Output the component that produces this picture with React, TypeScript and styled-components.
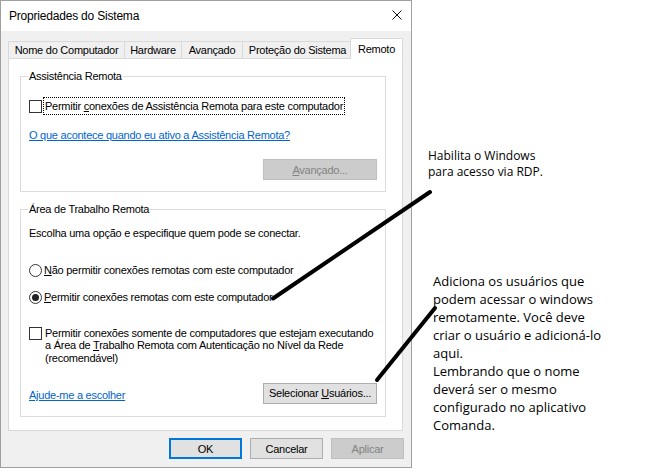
import React from "react";
import styled, { createGlobalStyle } from "styled-components";

const GlobalStyle = createGlobalStyle`
  html, body { margin: 0; padding: 0; background: #fff; }
  body { font-family: "Liberation Sans", Arial, sans-serif; }
  * { box-sizing: border-box; }
`;

const Page = styled.div`
  position: relative;
  width: 648px;
  height: 475px;
  background: #fff;
  overflow: hidden;
`;

const Window = styled.div`
  width: 412px;
  height: 468px;
  border: 1px solid #a0a0a0;
  background: #f0f0f0;
  display: flex;
  flex-direction: column;
  font-family: "Liberation Sans", Arial, sans-serif;
  font-size: 11px;
  letter-spacing: -0.25px;
  color: #000;
`;

const TitleBar = styled.div`
  height: 30px;
  background: #fff;
  display: flex;
  align-items: center;
  justify-content: space-between;
  padding: 0 9px 0 8px;
`;

const Title = styled.span`
  font-size: 12px;
  letter-spacing: -0.2px;
`;

const CloseIcon = styled.svg`
  width: 10px;
  height: 10px;
  margin-top: -2px;
`;

const Body = styled.div`
  flex: 1;
  display: flex;
  flex-direction: column;
  padding: 7px 8px 0 7px;
`;

const TabStrip = styled.div`
  display: flex;
  align-items: flex-end;
  height: 20px;
  position: relative;
  z-index: 1;
`;

const Tab = styled.div<{ $w: number; $active?: boolean }>`
  width: ${(p) => p.$w}px;
  height: ${(p) => (p.$active ? 21 : 17)}px;
  margin-bottom: ${(p) => (p.$active ? -1 : 0)}px;
  margin-left: ${(p) => (p.$active ? -3 : -1)}px;
  &:first-child {
    margin-left: 0;
  }
  border: 1px solid #d9d9d9;
  border-bottom: none;
  background: ${(p) => (p.$active ? "#fff" : "#f0f0f0")};
  display: flex;
  align-items: center;
  justify-content: center;
  white-space: nowrap;
`;

const Panel = styled.div`
  height: 373px;
  background: #fff;
  border: 1px solid #d9d9d9;
  padding: 17px 0 0 11px;
  display: flex;
  flex-direction: column;
  gap: 17px;
`;

const Group = styled.div<{ $pt: number; $pb: number }>`
  position: relative;
  width: 366px;
  border: 1px solid #dcdcdc;
  display: flex;
  flex-direction: column;
  padding: ${(p) => p.$pt}px 8px ${(p) => p.$pb}px 8px;
`;

const Legend = styled.span`
  position: absolute;
  top: -7px;
  left: 7px;
  padding: 0 1px;
  background: #fff;
  line-height: 13px;
`;

const Row = styled.div<{ $mt?: number; $h?: number }>`
  display: flex;
  align-items: center;
  margin-top: ${(p) => p.$mt ?? 0}px;
  height: ${(p) => (p.$h ? `${p.$h}px` : "auto")};
`;

const TopRow = styled.div<{ $mt?: number }>`
  display: flex;
  align-items: flex-start;
  margin-top: ${(p) => p.$mt ?? 0}px;
`;

const CheckBox = styled.span`
  width: 13px;
  height: 13px;
  flex: none;
  border: 1px solid #333;
  background: #fff;
`;

const Radio = styled.span<{ $checked?: boolean }>`
  width: 13px;
  height: 13px;
  flex: none;
  border: 1px solid #333;
  border-radius: 50%;
  background: #fff;
  display: flex;
  align-items: center;
  justify-content: center;
  &::after {
    content: "";
    width: 7px;
    height: 7px;
    border-radius: 50%;
    background: ${(p) => (p.$checked ? "#222" : "transparent")};
  }
`;

const FocusLabel = styled.span`
  margin-left: 1px;
  border: 1px dotted #000;
  padding: 0 1px;
  line-height: 16px;
  white-space: nowrap;
`;

const Label = styled.span<{ $ml: number; $lh?: number }>`
  margin-left: ${(p) => p.$ml}px;
  line-height: ${(p) => p.$lh ?? 16}px;
  white-space: nowrap;
`;

const Text = styled.div<{ $mt?: number }>`
  line-height: 14px;
  margin-top: ${(p) => p.$mt ?? 0}px;
`;

const Link = styled.a<{ $mt?: number }>`
  color: #0066cc;
  text-decoration: underline;
  line-height: 14px;
  align-self: flex-start;
  margin-top: ${(p) => p.$mt ?? 0}px;
  cursor: pointer;
`;

const Button = styled.button<{ $variant?: "default" | "disabled"; $w?: number }>`
  width: ${(p) => p.$w ?? 73}px;
  height: 21px;
  padding: 0;
  font-family: inherit;
  font-size: 11px;
  letter-spacing: -0.25px;
  background: ${(p) => (p.$variant === "disabled" ? "#cccccc" : "#e1e1e1")};
  color: ${(p) => (p.$variant === "disabled" ? "#838383" : "#000")};
  border: ${(p) =>
    p.$variant === "default"
      ? "2px solid #0078d7"
      : p.$variant === "disabled"
      ? "1px solid #bfbfbf"
      : "1px solid #adadad"};
  border-radius: 0;
  display: flex;
  align-items: center;
  justify-content: center;
`;

const RightButton = styled(Button)<{ $mt?: number }>`
  align-self: flex-end;
  margin-top: ${(p) => p.$mt ?? 0}px;
`;

const BetweenRow = styled.div`
  display: flex;
  justify-content: space-between;
  align-items: center;
  margin-top: 19px;
`;

const LowLink = styled(Link)`
  align-self: center;
  margin-top: 3px;
`;

const Footer = styled.div`
  display: flex;
  justify-content: flex-end;
  gap: 8px;
  margin-top: 7px;
  margin-right: -1px;
`;

const Overlay = styled.svg`
  position: absolute;
  left: 0;
  top: 0;
  width: 648px;
  height: 475px;
  pointer-events: none;
`;

const Note = styled.div<{ $x: number; $y: number; $size: number; $lh: number }>`
  position: absolute;
  left: ${(p) => p.$x}px;
  top: ${(p) => p.$y}px;
  font-family: "Open Sans", "Noto Sans", sans-serif;
  font-size: ${(p) => p.$size}px;
  line-height: ${(p) => p.$lh}px;
  color: #000;
  white-space: nowrap;
`;

export default function App() {
  return (
    <Page>
      <GlobalStyle />
      <Window>
        <TitleBar>
          <Title>Propriedades do Sistema</Title>
          <CloseIcon viewBox="0 0 10 10">
            <path d="M0.5 0.5 L9.5 9.5 M9.5 0.5 L0.5 9.5" stroke="#111" strokeWidth="1" fill="none" />
          </CloseIcon>
        </TitleBar>
        <Body>
          <TabStrip>
            <Tab $w={117}>Nome do Computador</Tab>
            <Tab $w={58}>Hardware</Tab>
            <Tab $w={62}>Avançado</Tab>
            <Tab $w={111}>Proteção do Sistema</Tab>
            <Tab $w={53} $active>
              Remoto
            </Tab>
          </TabStrip>
          <Panel>
            <Group $pt={20} $pb={11}>
              <Legend>Assistência Remota</Legend>
              <Row $h={18}>
                <CheckBox />
                <FocusLabel>
                  Permitir <u>c</u>onexões de Assistência Remota para este computador
                </FocusLabel>
              </Row>
              <Link $mt={13}>O que acontece quando eu ativo a Assistência Remota?</Link>
              <RightButton $variant="disabled" $w={114} $mt={17}>
                <span>
                  <u>A</u>vançado...
                </span>
              </RightButton>
            </Group>
            <Group $pt={16} $pb={12}>
              <Legend>Área de Trabalho Remota</Legend>
              <Text>Escolha uma opção e especifique quem pode se conectar.</Text>
              <Row $mt={22} $h={16}>
                <Radio />
                <Label $ml={2}>
                  <u>N</u>ão permitir conexões remotas com este computador
                </Label>
              </Row>
              <Row $mt={11} $h={16}>
                <Radio $checked />
                <Label $ml={2}>
                  <u>P</u>ermitir conexões remotas com este computador
                </Label>
              </Row>
              <TopRow $mt={22}>
                <CheckBox />
                <Label $ml={3} $lh={12.3}>
                  Permitir conexões somente de computadores que estejam executando
                  <br />a Área de <u>T</u>rabalho Remota com Autenticação no Nível da Rede
                  <br />
                  (recomendável)
                </Label>
              </TopRow>
              <BetweenRow>
                <LowLink>Ajude-me a escolher</LowLink>
                <Button $w={114}>
                  <span>
                    Selecionar <u>U</u>suários...
                  </span>
                </Button>
              </BetweenRow>
            </Group>
          </Panel>
          <Footer>
            <Button $variant="default">OK</Button>
            <Button>Cancelar</Button>
            <Button $variant="disabled">Aplicar</Button>
          </Footer>
        </Body>
      </Window>

      <Note $x={428} $y={148} $size={12} $lh={16}>
        Habilita o Windows
        <br />
        para acesso via RDP.
      </Note>
      <Note $x={433} $y={272} $size={13} $lh={18}>
        Adiciona os usuários que
        <br />
        podem acessar o windows
        <br />
        remotamente. Você deve
        <br />
        criar o usuário e adicioná-lo
        <br />
        aqui.
        <br />
        Lembrando que o nome
        <br />
        deverá ser o mesmo
        <br />
        configurado no aplicativo
        <br />
        Comanda.
      </Note>

      <Overlay viewBox="0 0 648 475">
        <line x1="430" y1="192" x2="273" y2="298.5" stroke="#000" strokeWidth="4" strokeLinecap="round" />
        <line x1="435" y1="308" x2="377" y2="380" stroke="#000" strokeWidth="4" strokeLinecap="round" />
      </Overlay>
    </Page>
  );
}
